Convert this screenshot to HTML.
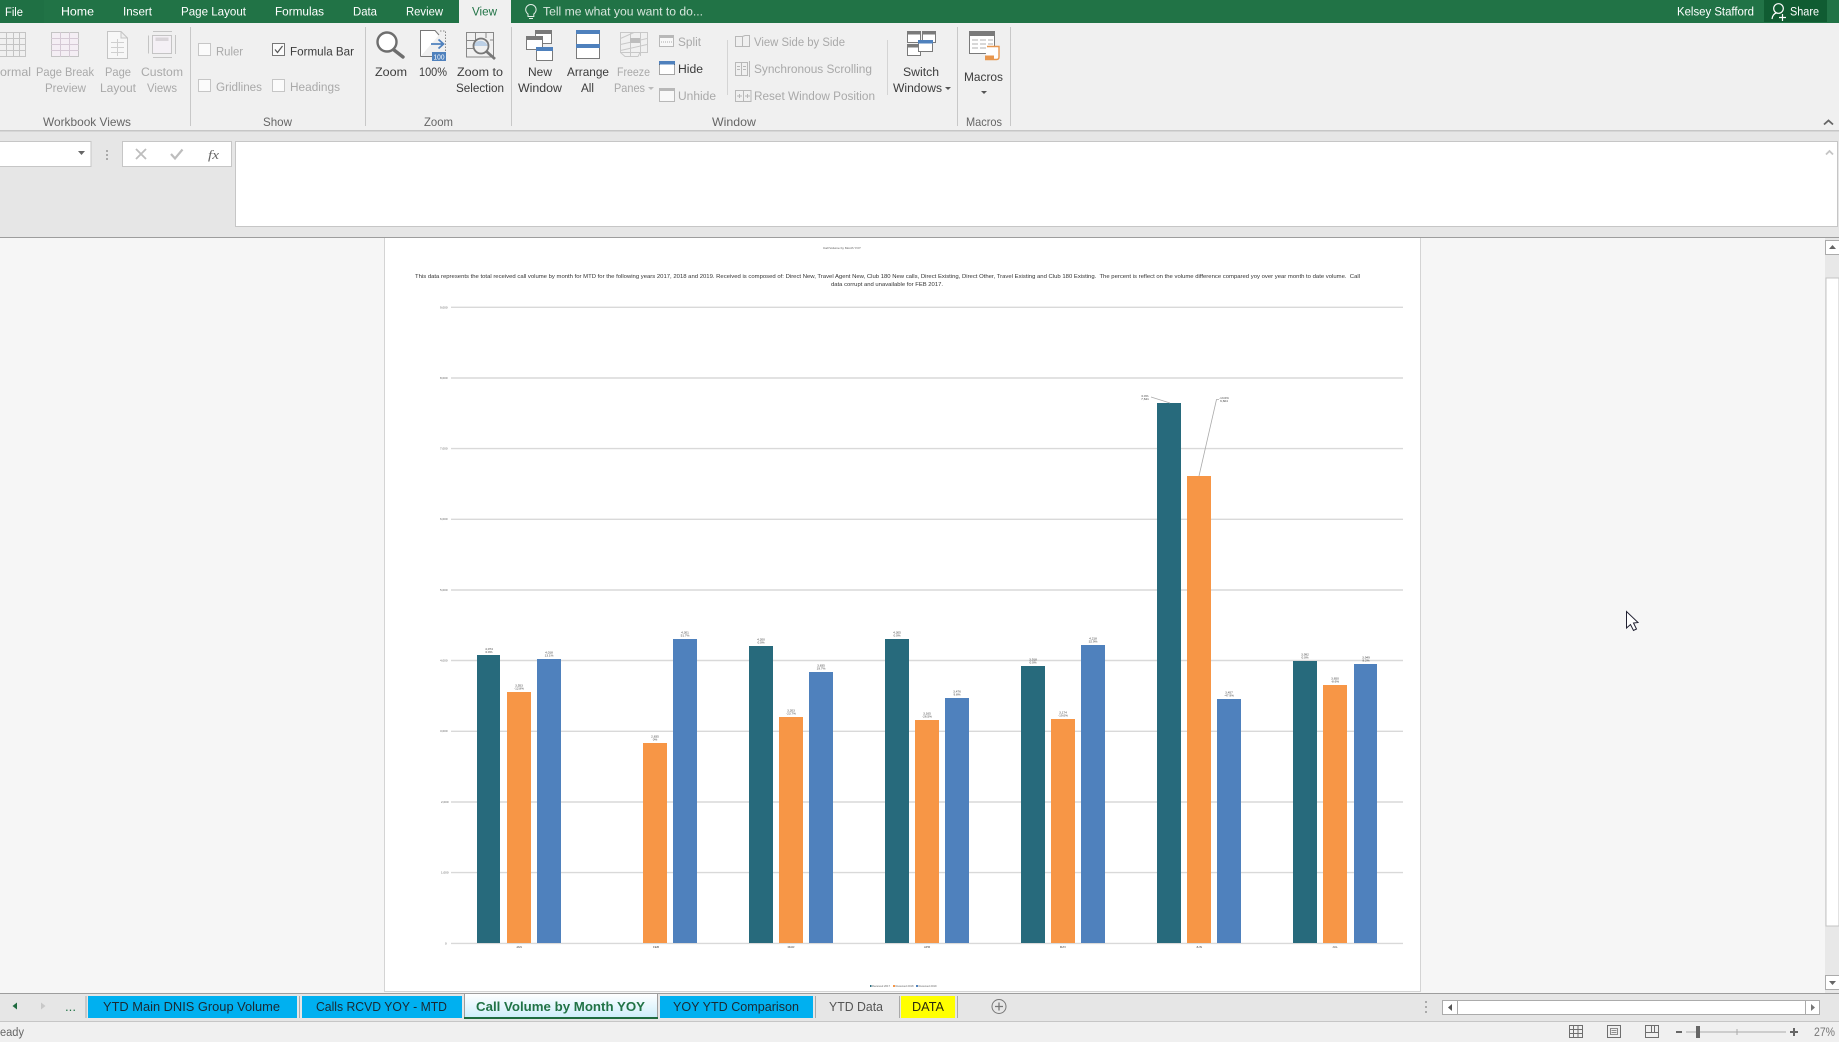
<!DOCTYPE html>
<html lang="en">
<head>
<meta charset="utf-8">
<title>Call Volume by Month YOY - Excel</title>
<style>
html,body{margin:0;padding:0;background:#f0f0f0;overflow:hidden}
svg{display:block}
text{font-family:"Liberation Sans",sans-serif;font-size:12.2px;white-space:pre}
.w{fill:#fff}.g{fill:#d7e6dd}.t{fill:#444}.k{fill:#3c3c3c}.d{fill:#a9a9a9}.l{font-size:11.8px;fill:#666}
.s{font-size:13px;fill:#1a2a33}
.c{font-size:3.1px;fill:#444;text-anchor:middle}
.ax{font-size:3px;fill:#666}
.gl{stroke:#d9d9d9;stroke-width:1.4}
.sep{stroke:#c8c8c8;stroke-width:1}
.b1{fill:#276a7c}.b2{fill:#f79646}.b3{fill:#4f81bd}
</style>
</head>
<body>
<svg width="1839" height="1042" viewBox="0 0 1839 1042" xmlns="http://www.w3.org/2000/svg">
<!-- base -->
<rect width="1839" height="1042" fill="#f0f0f0"/>
<!-- title / tabs -->
<rect width="1839" height="23" fill="#217346"/>
<rect width="44" height="23" fill="#1f7044"/>
<rect x="459" width="52" height="23" fill="#f0f0f0"/>
<rect x="1764" width="63" height="22" fill="#105c32"/>
<text class="w" x="5" y="16" textLength="18" lengthAdjust="spacingAndGlyphs">File</text>
<text class="w" x="61" y="15.5" textLength="33" lengthAdjust="spacingAndGlyphs">Home</text>
<text class="w" x="123" y="15.5" textLength="29" lengthAdjust="spacingAndGlyphs">Insert</text>
<text class="w" x="181" y="15.5" textLength="65" lengthAdjust="spacingAndGlyphs">Page Layout</text>
<text class="w" x="275" y="15.5" textLength="49" lengthAdjust="spacingAndGlyphs">Formulas</text>
<text class="w" x="353" y="15.5" textLength="24" lengthAdjust="spacingAndGlyphs">Data</text>
<text class="w" x="406" y="15.5" textLength="37" lengthAdjust="spacingAndGlyphs">Review</text>
<text x="472" y="15.5" textLength="25" lengthAdjust="spacingAndGlyphs" fill="#217346">View</text>
<path d="M528 14c-1.500-1.400-2.300-2.600-2.300-4.300a5.200 5.200 0 0 1 10.400 0c0 1.700-.8 2.900-2.300 4.300v2.500h-5.800zM529 18.500h4" fill="none" stroke="#e4eee8" stroke-width="1"/>
<text class="g" x="543" y="15.5" textLength="160" lengthAdjust="spacingAndGlyphs">Tell me what you want to do...</text>
<text class="w" x="1677" y="15.5" textLength="77" lengthAdjust="spacingAndGlyphs">Kelsey Stafford</text>
<circle cx="1778.5" cy="8.5" r="4.8" fill="none" stroke="#fff" stroke-width="1.200"/>
<path d="M1772 19c.5-3.500 2.500-5.500 4.500-6M1779 17.500h7M1782.500 14v7" fill="none" stroke="#fff" stroke-width="1.200"/>
<text class="w" x="1790" y="15.5" textLength="29" lengthAdjust="spacingAndGlyphs">Share</text>

<!-- ribbon lines -->
<rect y="130" width="1839" height="1.500" fill="#c6c6c6"/>
<path class="sep" d="M190.500 27V126M365.500 27V126M511.500 27V126M957.500 27V126M1010.500 27V126"/>
<path d="M727.500 40V95M887.500 40V95" stroke="#d4d4d4"/>

<!-- Workbook views icons -->
<g fill="none" stroke="#c4c4c4">
<path d="M-1 32.500H25.500V56.500H-1M-1 38.500H25.500M-1 44.500H25.500M-1 50.500H25.500M6.500 32V57M13.500 32V57M19.500 32V57"/>
<rect x="51.500" y="32.500" width="27" height="24" fill="#f4eef4"/>
<path d="M51 38.500H79M51 44.500H79M51 50.500H79M60.500 32V57M69.500 32V57" stroke="#d5c9d5"/>
<path d="M107.500 31.500H121L127.500 38V58.500H107.500ZM121 31.500V38H127.500" fill="#f7f7f7"/>
<path d="M111 42.500H124M111 47.500H124M111 52.500H124M117.500 39V56" stroke="#cfcfcf"/>
<path d="M148.500 35.500V53.500M153 31.500H172M153 57.500H172M175.500 35V54"/>
<rect x="152.500" y="35.500" width="19" height="18" fill="#f4f0f5"/>
<rect x="155.500" y="37.500" width="13" height="3.500" fill="#d8d4d8" stroke="none"/>
</g>
<text class="d" x="0" y="76" textLength="31" lengthAdjust="spacingAndGlyphs">ormal</text>
<text class="d" x="36" y="76" textLength="58" lengthAdjust="spacingAndGlyphs">Page Break</text>
<text class="d" x="45" y="92" textLength="41" lengthAdjust="spacingAndGlyphs">Preview</text>
<text class="d" x="105" y="76" textLength="26" lengthAdjust="spacingAndGlyphs">Page</text>
<text class="d" x="100" y="92" textLength="36" lengthAdjust="spacingAndGlyphs">Layout</text>
<text class="d" x="141" y="76" textLength="42" lengthAdjust="spacingAndGlyphs">Custom</text>
<text class="d" x="147" y="92" textLength="30" lengthAdjust="spacingAndGlyphs">Views</text>
<text class="l" x="43" y="126" textLength="88" lengthAdjust="spacingAndGlyphs">Workbook Views</text>

<!-- Show -->
<g fill="#fbfbfb" stroke="#c6c6c6">
<rect x="198.500" y="43.500" width="12" height="12"/>
<rect x="198.500" y="79.500" width="12" height="12"/>
<rect x="272.500" y="79.500" width="12" height="12"/>
<rect x="272.500" y="43.500" width="12" height="12" stroke="#777"/>
</g>
<path d="M275 49.500l2.500 3 5-6.500" fill="none" stroke="#555" stroke-width="1.200"/>
<text class="d" x="216" y="55.500" textLength="27" lengthAdjust="spacingAndGlyphs">Ruler</text>
<text class="k" x="290" y="55.500" textLength="64" lengthAdjust="spacingAndGlyphs">Formula Bar</text>
<text class="d" x="216" y="91" textLength="46" lengthAdjust="spacingAndGlyphs">Gridlines</text>
<text class="d" x="290" y="91" textLength="50" lengthAdjust="spacingAndGlyphs">Headings</text>
<text class="l" x="263" y="126" textLength="29" lengthAdjust="spacingAndGlyphs">Show</text>

<!-- Zoom group -->
<circle cx="387" cy="42" r="9.500" fill="#fff" stroke="#6e6e6e" stroke-width="2.400"/>
<path d="M394 50L403 57" stroke="#6e6e6e" stroke-width="3.400" stroke-linecap="round"/>
<text class="k" x="375" y="76" textLength="32" lengthAdjust="spacingAndGlyphs">Zoom</text>
<path d="M420.500 56.500V30.500H435L439 35" fill="#fff" stroke="#777"/>
<path d="M440 31H445.500V52" fill="none" stroke="#888" stroke-dasharray="1.500 1.500"/>
<path d="M420.500 56.500H432" stroke="#777"/>
<path d="M431 44H443M438.500 39.500L443.500 44L438.500 48.500" fill="none" stroke="#4f81bd" stroke-width="1.800"/>
<rect x="432" y="52" width="14" height="9" fill="#4f81bd"/>
<text x="433.500" y="59.500" style="font-size:7.500px" fill="#fff" textLength="11" lengthAdjust="spacingAndGlyphs">100</text>
<text class="k" x="419" y="76" textLength="28" lengthAdjust="spacingAndGlyphs">100%</text>
<g fill="none" stroke="#888"><path d="M466.500 32.500H493.500V57H466.500ZM466.500 40.500H475M466.500 48.500H473M475.500 32V40M486 32V38M493 40H490"/></g>
<path d="M473 46a8 8 0 0 1 15 0z" fill="#bcd0e6"/>
<circle cx="481" cy="46" r="7.500" fill="none" stroke="#777" stroke-width="1.800"/>
<path d="M486.500 51.500L495 59" stroke="#777" stroke-width="2.800"/>
<text class="k" x="457" y="76" textLength="46" lengthAdjust="spacingAndGlyphs">Zoom to</text>
<text class="k" x="456" y="92" textLength="48" lengthAdjust="spacingAndGlyphs">Selection</text>
<text class="l" x="424" y="126" textLength="29" lengthAdjust="spacingAndGlyphs">Zoom</text>

<!-- New window -->
<g fill="#fff" stroke="#7a7a7a">
<rect x="535.500" y="30.500" width="16" height="13"/><rect x="535" y="30" width="17" height="4" fill="#7a7a7a" stroke="none"/>
<rect x="526.500" y="36.500" width="16" height="13"/><rect x="526" y="36" width="17" height="4" fill="#7a7a7a" stroke="none"/>
<rect x="536.500" y="47.500" width="16" height="13"/><rect x="536" y="47" width="17" height="4" fill="#4f81bd" stroke="none"/>
<!-- arrange -->
<rect x="576.500" y="30.500" width="23" height="28"/>
<rect x="576" y="30" width="24" height="4" fill="#4f81bd" stroke="none"/>
<rect x="576" y="44" width="24" height="4" fill="#4f81bd" stroke="none"/>
</g>
<text class="k" x="528" y="76" textLength="24" lengthAdjust="spacingAndGlyphs">New</text>
<text class="k" x="518" y="92" textLength="44" lengthAdjust="spacingAndGlyphs">Window</text>
<text class="k" x="567" y="76" textLength="42" lengthAdjust="spacingAndGlyphs">Arrange</text>
<text class="k" x="581" y="92" textLength="13" lengthAdjust="spacingAndGlyphs">All</text>
<!-- freeze -->
<g fill="none" stroke="#c8c8c8"><path d="M620.500 32.500H647.500V52.500H620.500ZM620.500 38.500L634 32.500M620.500 44.500L647 38.500M620.500 50.500L647 44.500M630.500 32V56M640.500 32V56M620.500 52.500L625 56.500H638L640 52.500"/></g>
<rect x="630" y="38" width="10" height="5" fill="#bdbdbd"/>
<text class="d" x="617" y="76" textLength="33" lengthAdjust="spacingAndGlyphs">Freeze</text>
<text class="d" x="614" y="92" textLength="31" lengthAdjust="spacingAndGlyphs">Panes</text>
<path d="M648 87h6l-3 3z" fill="#bbb"/>
<!-- split hide unhide -->
<g fill="#f8f8f8" stroke="#b8b8b8">
<rect x="659.500" y="35.500" width="14" height="11"/>
<rect x="659.500" y="88.500" width="15" height="13"/>
</g>
<rect x="659" y="35" width="15" height="3" fill="#b8b8b8"/>
<path d="M661 42h11" stroke="#aaa" stroke-dasharray="1 1"/>
<rect x="659" y="88" width="16" height="3" fill="#b8b8b8"/>
<rect x="659.500" y="61.500" width="15" height="13" fill="#fff" stroke="#555" stroke-dasharray="1 1"/>
<rect x="659" y="61" width="16" height="3.500" fill="#4f81bd"/>
<text class="d" x="678" y="46" textLength="23" lengthAdjust="spacingAndGlyphs">Split</text>
<text class="k" x="678" y="73" textLength="25" lengthAdjust="spacingAndGlyphs">Hide</text>
<text class="d" x="678" y="100" textLength="38" lengthAdjust="spacingAndGlyphs">Unhide</text>
<!-- side by side -->
<g fill="none" stroke="#b8b8b8">
<path d="M735.500 36.500H742.500V46.500H735.500ZM742.500 36.500L745 35.500H749.500V46.500H742.500"/>
<path d="M735.500 62.500H747.500V75.500H735.500ZM741.500 62.500V75.500M737 66.500h3M737 69.500h3M743 66.500h3M743 69.500h3M749.500 61V77"/>
<path d="M735.500 90.500H751V101.500H735.500ZM743.500 90.500V101.500M737 96h5M745 96h5M739.500 94v4M747.500 94v4"/>
</g>
<text class="d" x="754" y="46" textLength="91" lengthAdjust="spacingAndGlyphs">View Side by Side</text>
<text class="d" x="754" y="73" textLength="118" lengthAdjust="spacingAndGlyphs">Synchronous Scrolling</text>
<text class="d" x="754" y="100" textLength="121" lengthAdjust="spacingAndGlyphs">Reset Window Position</text>
<!-- switch -->
<g fill="#fff" stroke="#7a7a7a">
<rect x="907.500" y="31.500" width="13" height="11"/><rect x="907" y="31" width="14" height="3.500" fill="#7a7a7a" stroke="none"/>
<rect x="922.500" y="31.500" width="13" height="11"/><rect x="922" y="31" width="14" height="3.500" fill="#7a7a7a" stroke="none"/>
<rect x="907.500" y="44.500" width="13" height="11"/><rect x="907" y="44" width="14" height="3.500" fill="#7a7a7a" stroke="none"/>
<rect x="918.500" y="40.500" width="14" height="11"/><rect x="918" y="40" width="15" height="3.500" fill="#4f81bd" stroke="none"/>
</g>
<text class="k" x="903" y="76" textLength="36" lengthAdjust="spacingAndGlyphs">Switch</text>
<text class="k" x="893" y="92" textLength="49" lengthAdjust="spacingAndGlyphs">Windows</text>
<path d="M945 87h6l-3 3z" fill="#555"/>
<!-- macros -->
<rect x="969.500" y="32.500" width="25" height="21" fill="#fff" stroke="#7a7a7a"/>
<rect x="969" y="31" width="26" height="5" fill="#7a7a7a"/>
<path d="M972 40h6M980 40h6M988 40h5M972 44h6M980 44h6M988 44h5M972 48h6M980 48h6" stroke="#b0b0b0"/>
<path d="M987 46.500H999V57c0 2-1 2.500-2.500 2.500H985" fill="#fff" stroke="#e8964d" stroke-width="1.400"/>
<path d="M985 55.500H994V59H985z" fill="#e8964d"/>
<text class="k" x="964" y="81" textLength="39" lengthAdjust="spacingAndGlyphs">Macros</text>
<path d="M981 91h6l-3 3z" fill="#555"/>
<text class="l" x="712" y="126" textLength="44" lengthAdjust="spacingAndGlyphs">Window</text>
<text class="l" x="966" y="126" textLength="36" lengthAdjust="spacingAndGlyphs">Macros</text>
<path d="M1824 124.500L1828.500 120.500L1833 124.500" fill="none" stroke="#666" stroke-width="1.800"/>

<!-- formula bar -->
<rect y="131.500" width="1839" height="105.500" fill="#e6e6e6"/>
<rect x="-2" y="141.500" width="93" height="25" fill="#fff" stroke="#c6c6c6"/>
<path d="M78 151h7l-3.500 4z" fill="#666"/>
<path d="M107 150v2M107 154v2M107 158v2" stroke="#aaa" stroke-width="2"/>
<rect x="122.500" y="141.500" width="109" height="25" fill="#fff" stroke="#c6c6c6"/>
<path d="M136 149l10 10M146 149l-10 10" stroke="#bdbdbd" stroke-width="1.800"/>
<path d="M171 154l4 4.500 7.500-9" fill="none" stroke="#bdbdbd" stroke-width="2.200"/>
<text x="208" y="159" style="font-family:'Liberation Serif',serif;font-size:13px;font-style:italic" fill="#666" textLength="11" lengthAdjust="spacingAndGlyphs">fx</text>
<rect x="235.500" y="141.500" width="1602" height="85" fill="#fff" stroke="#c6c6c6"/>
<path d="M1826 154.500L1829.500 151L1833 154.500" fill="none" stroke="#c4c4c4" stroke-width="1.800"/>
<rect y="237" width="1839" height="1" fill="#9d9d9d"/>

<!-- sheet -->
<rect y="238" width="1839" height="755" fill="#f6f6f6"/>
<rect x="384" y="238" width="1037" height="753" fill="#fff"/>
<path d="M384.500 238V991M1420.500 238V991" stroke="#d4d4d4"/>
<rect x="384" y="991" width="1037" height="1" fill="#d4d4d4"/>
<!-- v scrollbar -->
<rect x="1825" y="238" width="14" height="755" fill="#e8e8e8"/>
<rect x="1826" y="278" width="13" height="648" fill="#fff" stroke="#c4c4c4" stroke-width="1"/>
<rect x="1825.500" y="240.500" width="14" height="14" fill="#fff" stroke="#ababab"/>
<path d="M1829 249h7l-3.500-4z" fill="#666"/>
<rect x="1825.500" y="975.500" width="14" height="14" fill="#fff" stroke="#ababab"/>
<path d="M1829 981h7l-3.500 4z" fill="#666"/>

<!-- page text -->
<text x="823" y="249" style="font-size:3px" fill="#555" textLength="38" lengthAdjust="spacingAndGlyphs">Call Volume by Month YOY</text>
<text x="415" y="278" style="font-size:5.2px" fill="#333" textLength="945" lengthAdjust="spacingAndGlyphs">This data represents the total received call volume by month for MTD for the following years 2017, 2018 and 2019. Received is composed of: Direct New, Travel Agent New, Club 180 New calls, Direct Existing, Direct Other, Travel Existing and Club 180 Existing.  The percent is reflect on the volume difference compared yoy over year month to date volume.  Call</text>
<text x="831" y="286" style="font-size:5.2px" fill="#333" textLength="112" lengthAdjust="spacingAndGlyphs">data corrupt and unavailable for FEB 2017.</text>

<!-- gridlines -->
<path class="gl" d="M451 307.300H1403M451 378H1403M451 448.600H1403M451 519.300H1403M451 590H1403M451 660.500H1403M451 731.300H1403M451 802H1403M451 872.600H1403M451 943.400H1403"/>
<g>
<text class="ax" x="440" y="308.500">9,000</text>
<text class="ax" x="440" y="379">8,000</text>
<text class="ax" x="440" y="449.500">7,000</text>
<text class="ax" x="440" y="520">6,000</text>
<text class="ax" x="440" y="591">5,000</text>
<text class="ax" x="440" y="661.500">4,000</text>
<text class="ax" x="440" y="732">3,000</text>
<text class="ax" x="441" y="803">2,000</text>
<text class="ax" x="441" y="873.500">1,000</text>
<text class="ax" x="445" y="944.500">0</text>
</g>

<!-- bars -->
<rect class="b1" x="477" y="655" width="23" height="288"/>
<rect class="b2" x="507" y="692" width="24" height="251"/>
<rect class="b3" x="537" y="659" width="24" height="284"/>
<rect class="b2" x="643" y="743" width="24" height="200"/>
<rect class="b3" x="673" y="639" width="24" height="304"/>
<rect class="b1" x="749" y="646" width="24" height="297"/>
<rect class="b2" x="779" y="717" width="24" height="226"/>
<rect class="b3" x="809" y="672" width="24" height="271"/>
<rect class="b1" x="885" y="639" width="24" height="304"/>
<rect class="b2" x="915" y="720" width="24" height="223"/>
<rect class="b3" x="945" y="698" width="24" height="245"/>
<rect class="b1" x="1021" y="666" width="24" height="277"/>
<rect class="b2" x="1051" y="719" width="24" height="224"/>
<rect class="b3" x="1081" y="645" width="24" height="298"/>
<rect class="b1" x="1157" y="403" width="24" height="540"/>
<rect class="b2" x="1187" y="476" width="24" height="467"/>
<rect class="b3" x="1217" y="699" width="24" height="244"/>
<rect class="b1" x="1293" y="661" width="24" height="282"/>
<rect class="b2" x="1323" y="685" width="24" height="258"/>
<rect class="b3" x="1354" y="664" width="23" height="279"/>

<!-- data labels -->
<text class="c" x="489" y="650">4,074</text><text class="c" x="489" y="653">0.0%</text>
<text class="c" x="519" y="686.5">3,553</text><text class="c" x="519" y="689.5">-12.8%</text>
<text class="c" x="549" y="653.5">4,018</text><text class="c" x="549" y="656.5">13.1%</text>
<text class="c" x="655" y="737.5">2,835</text><text class="c" x="655" y="740.5">0%</text>
<text class="c" x="685" y="633.5">4,301</text><text class="c" x="685" y="636.5">51.7%</text>
<text class="c" x="761" y="640.5">4,200</text><text class="c" x="761" y="643.5">0.0%</text>
<text class="c" x="791" y="711.5">3,203</text><text class="c" x="791" y="714.5">-23.7%</text>
<text class="c" x="821" y="666.5">3,835</text><text class="c" x="821" y="669.5">19.7%</text>
<text class="c" x="897" y="633.5">4,305</text><text class="c" x="897" y="636.5">0.0%</text>
<text class="c" x="927" y="714.5">3,165</text><text class="c" x="927" y="717.5">-26.5%</text>
<text class="c" x="957" y="692.5">3,476</text><text class="c" x="957" y="695.5">9.8%</text>
<text class="c" x="1033" y="660.5">3,918</text><text class="c" x="1033" y="663.5">0.0%</text>
<text class="c" x="1063" y="713.5">3,174</text><text class="c" x="1063" y="716.5">-19.0%</text>
<text class="c" x="1093" y="639.5">4,218</text><text class="c" x="1093" y="642.5">32.9%</text>
<text class="c" x="1229" y="693.5">3,457</text><text class="c" x="1229" y="696.5">-47.9%</text>
<text class="c" x="1305" y="655.5">3,992</text><text class="c" x="1305" y="658.5">0.0%</text>
<text class="c" x="1335" y="679.5">3,650</text><text class="c" x="1335" y="682.5">-8.6%</text>
<text class="c" x="1366" y="658.5">3,949</text><text class="c" x="1366" y="661.5">8.2%</text>
<!-- callouts -->
<text class="c" x="1145" y="397">0.0%</text><text class="c" x="1145" y="400">7,641</text>
<text class="c" x="1224" y="399">-13.6%</text><text class="c" x="1224" y="402">6,604</text>
<path d="M1151 397L1170 403M1219 399.500H1216.500L1199 476" fill="none" stroke="#aaa" stroke-width=".8"/>

<!-- categories -->
<g>
<text class="c" x="519" y="948">JAN</text><text class="c" x="656" y="948">FEB</text><text class="c" x="791" y="948">MAR</text><text class="c" x="927" y="948">APR</text><text class="c" x="1063" y="948">MAY</text><text class="c" x="1199" y="948">JUN</text><text class="c" x="1335" y="948">JUL</text>
</g>
<!-- legend -->
<rect x="870" y="985" width="1.500" height="2" class="b1"/>
<text class="ax" x="872" y="987" textLength="18" lengthAdjust="spacingAndGlyphs">Received 2017</text>
<rect x="893" y="985" width="2" height="2" class="b2"/>
<text class="ax" x="895.5" y="987" textLength="18" lengthAdjust="spacingAndGlyphs">Received 2018</text>
<rect x="916" y="985" width="2" height="2" class="b3"/>
<text class="ax" x="918.5" y="987" textLength="18" lengthAdjust="spacingAndGlyphs">Received 2019</text>

<!-- cursor -->
<path d="M1626.500 611.500V628L1630.500 624.500L1633.500 630.500L1636.500 629L1633.500 623L1638 622.500Z" fill="#fff" stroke="#223" stroke-width="1"/>

<!-- tab bar -->
<rect y="993" width="1839" height="1.200" fill="#9d9d9d"/>
<rect y="994" width="1839" height="27" fill="#e6e6e6"/>
<rect y="1021" width="1839" height="1" fill="#c6c6c6"/>
<path d="M17 1002.500V1009.500L12.500 1006Z" fill="#1f6b40"/>
<path d="M41 1002.500V1009.500L45.500 1006Z" fill="#c8c8c8"/>
<text x="65" y="1011" style="font-size:13px" fill="#217346" textLength="11" lengthAdjust="spacingAndGlyphs">...</text>
<path d="M86 996V1018" stroke="#aaa"/>
<rect x="88" y="996" width="209" height="22" fill="#00b0f0"/>
<rect x="302" y="996" width="160" height="22" fill="#00b0f0"/>
<path d="M299.500 996V1018" stroke="#aaa"/>
<defs><linearGradient id="ag" x1="0" y1="0" x2="0" y2="1"><stop offset="0" stop-color="#fff"/><stop offset="1" stop-color="#cdeefb"/></linearGradient></defs>
<rect x="464.500" y="993.500" width="193" height="24" fill="url(#ag)" stroke="#9d9d9d"/>
<rect x="464" y="1017" width="194" height="2" fill="#1f6b40"/>
<rect x="660" y="996" width="153" height="22" fill="#00b0f0"/>
<rect x="901" y="996" width="54" height="22" fill="#ffff00"/>
<path d="M815.500 996V1018M899.500 996V1018M957.500 996V1018" stroke="#aaa"/>
<text class="s" x="103" y="1011" textLength="177" lengthAdjust="spacingAndGlyphs">YTD Main DNIS Group Volume</text>
<text class="s" x="316" y="1011" textLength="131" lengthAdjust="spacingAndGlyphs">Calls RCVD YOY - MTD</text>
<text x="476" y="1011" style="font-size:13px;font-weight:bold" fill="#217346" textLength="169" lengthAdjust="spacingAndGlyphs">Call Volume by Month YOY</text>
<text class="s" x="673" y="1011" textLength="126" lengthAdjust="spacingAndGlyphs">YOY YTD Comparison</text>
<text x="829" y="1011" style="font-size:13px" fill="#555" textLength="54" lengthAdjust="spacingAndGlyphs">YTD Data</text>
<text x="912" y="1011" style="font-size:13px" fill="#2a2a10" textLength="32" lengthAdjust="spacingAndGlyphs">DATA</text>
<circle cx="999" cy="1006.500" r="7" fill="none" stroke="#777"/>
<path d="M995 1006.500h8M999 1002.500v8" stroke="#777" stroke-width="1.300"/>
<path d="M1426 1001v2M1426 1006v2M1426 1011v2" stroke="#aaa" stroke-width="2"/>
<rect x="1442.500" y="1000.500" width="377" height="14" fill="#fff" stroke="#ababab"/>
<path d="M1457.500 1000V1015M1805.500 1000V1015" stroke="#ababab"/>
<path d="M1452 1004v7l-4-3.500z" fill="#555"/>
<path d="M1811 1004v7l4-3.500z" fill="#777"/>

<!-- status -->
<text x="0" y="1036" style="font-size:11.500px" fill="#666" textLength="24" lengthAdjust="spacingAndGlyphs">eady</text>
<g fill="none" stroke="#6e6e6e">
<path d="M1569.500 1025.500H1582.500V1037.500H1569.500ZM1569.500 1029.500H1582.500M1569.500 1033.500H1582.500M1573.500 1025V1038M1578 1025V1038"/>
<path d="M1607.500 1025.500H1620.500V1037.500H1607.500Z"/>
<path d="M1610.500 1028.500H1617.500V1034.500H1610.500ZM1611.500 1030.500h5M1611.500 1032.500h5" stroke-width=".8"/>
<path d="M1645.500 1025.500H1658.500V1037.500H1645.500ZM1651.500 1025V1032.500M1645.500 1032.500H1658.500M1654.500 1025V1032.500"/>
</g>
<rect x="1676" y="1031" width="6" height="2" fill="#666"/>
<rect x="1686" y="1031.500" width="100" height="1" fill="#aaa"/>
<rect x="1736.500" y="1029" width="1" height="6" fill="#aaa"/>
<rect x="1696" y="1026" width="4" height="12" fill="#666"/>
<path d="M1790 1032h8M1794 1028v8" stroke="#666" stroke-width="2"/>
<text x="1814" y="1036" style="font-size:11.500px" fill="#777" textLength="21" lengthAdjust="spacingAndGlyphs">27%</text>
</svg>
</body>
</html>
